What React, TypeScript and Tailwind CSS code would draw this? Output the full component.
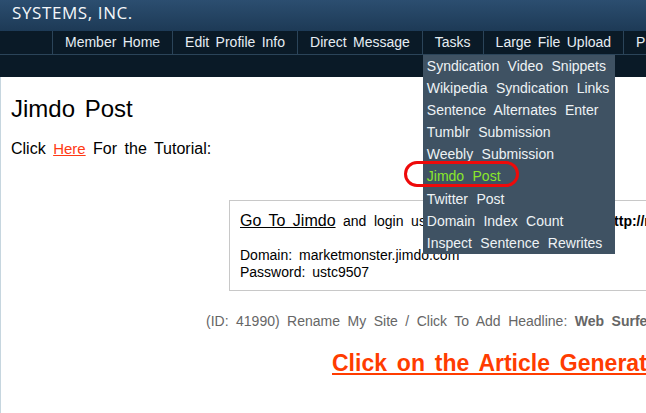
import { ReactNode } from 'react';

const navItems = ['Member Home', 'Edit Profile Info', 'Direct Message', 'Tasks', 'Large File Upload', 'Profile'];

const taskItems = [
  'Syndication Video Snippets',
  'Wikipedia Syndication Links',
  'Sentence Alternates Enter',
  'Tumblr Submission',
  'Weebly Submission',
  'Jimdo Post',
  'Twitter Post',
  'Domain Index Count',
  'Inspect Sentence Rewrites',
];

const TasksMenu = () => (
  <ul className="absolute left-0 top-[24px] z-20 w-[192px] bg-[#3f5263] [word-spacing:4.5px]">
    {taskItems.map((item) => (
      <li
        key={item}
        className={
          item === 'Jimdo Post'
            ? 'relative h-[22.1px] whitespace-nowrap px-[4px] text-[14px] leading-[22px] text-[#8ae82a]'
            : 'h-[22.1px] whitespace-nowrap px-[4px] text-[14px] leading-[22px] text-[#eef2f5]'
        }
      >
        {item}
        {item === 'Jimdo Post' && (
          <span className="pointer-events-none absolute left-[-19px] top-[-4px] h-[26px] w-[115px] rounded-full border-[3px] border-[#ee0a0a]" />
        )}
      </li>
    ))}
  </ul>
);

const NavItem = ({ label, children }: { label: string; children?: ReactNode }) => (
  <div className="relative h-[23px] whitespace-nowrap border-l border-[#2b4459] px-3 text-[14px] leading-[23px] text-[#e6edf3] [word-spacing:2.5px]">
    {label}
    {children}
  </div>
);

export default function App() {
  return (
    <div className="relative h-[413px] w-[646px] overflow-hidden bg-white font-['Liberation_Sans',Arial,sans-serif] [word-spacing:3px]">
      <header className="h-[31px] bg-gradient-to-b from-[#2c4e70] to-[#1d3a56] px-[12px] pt-[2px] font-['Open_Sans',sans-serif] text-[17px] leading-[22px] tracking-[0.6px] text-[#f4f7fa] [word-spacing:0px]">
        SYSTEMS, INC.
      </header>

      <nav className="flex h-[24px] border-b border-[#2b4459] bg-[#0a1a27]">
        <div className="w-[52px] shrink-0" />
        {navItems.map((label) => (
          <NavItem key={label} label={label}>
            {label === 'Tasks' && <TasksMenu />}
          </NavItem>
        ))}
      </nav>
      <div className="h-[22px] bg-[#0a1a27]" />

      <main className="h-full border-l border-[#c6d6df] pl-[10px] pt-[18px]">
        <h1 className="text-[24px] leading-[28px] text-black">Jimdo Post</h1>

        <p className="mt-[16px] text-[16px] leading-[20px] text-black">
          Click{' '}
          <a href="#" className="text-[15px] text-[#ff3a14] underline">
            Here
          </a>{' '}
          For the Tutorial:
        </p>

        <div className="ml-[218px] mt-[41px] w-[600px] border border-[#c8c8c8] px-[10px] pb-[9px] pt-[10px]">
          <p className="whitespace-nowrap text-[16px] leading-[20px] text-black">
            <a href="#" className="underline">
              Go To Jimdo
            </a>{' '}
            <span className="text-[14px] [word-spacing:3.7px]">
              and login using these details below at <b>http://marketmonster.jimdo.com</b>
            </span>
          </p>
          <div className="mt-[16px] text-[14px] leading-[17px] text-black">
            <p>Domain: marketmonster.jimdo.com</p>
            <p>Password: ustc9507</p>
          </div>
        </div>

        <p className="ml-[195px] mt-[21px] whitespace-nowrap text-[14px] leading-[18px] text-[#666666] [word-spacing:3.6px]">
          (ID: 41990) Rename My Site / Click To Add Headline: <b>Web Surfers Guide</b>
        </p>

        <p className="ml-[321px] mt-[20px] whitespace-nowrap text-[23px] font-bold leading-[27px] [word-spacing:3.5px]">
          <a href="#" className="text-[#ff3c00] underline">
            Click on the Article Generator
          </a>
        </p>
      </main>
    </div>
  );
}
